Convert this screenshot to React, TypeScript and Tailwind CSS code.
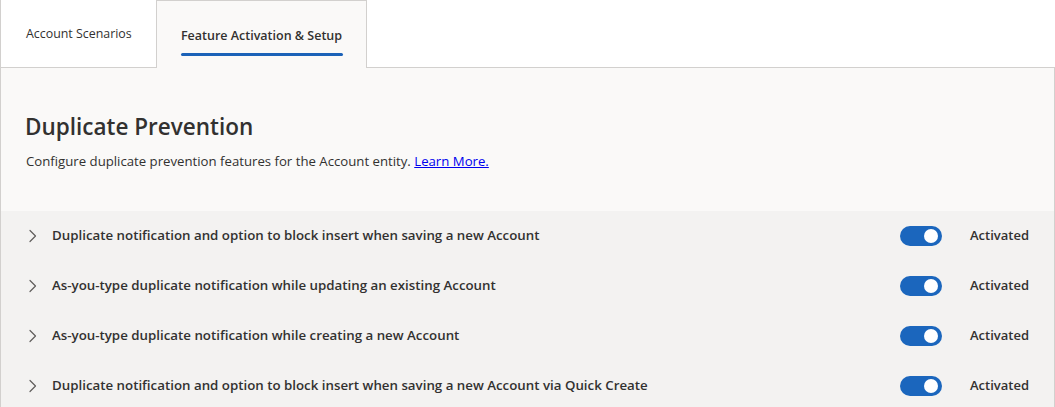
import React from "react";

const font = { fontFamily: '"Open Sans", "Noto Sans", sans-serif' };

const rules = [
  "Duplicate notification and option to block insert when saving a new Account",
  "As-you-type duplicate notification while updating an existing Account",
  "As-you-type duplicate notification while creating a new Account",
  "Duplicate notification and option to block insert when saving a new Account via Quick Create",
];

function Chevron() {
  return (
    <svg width="10" height="14" viewBox="0 0 10 14" fill="none" className="shrink-0">
      <path d="M3 1.5 L8.5 7 L3 12.5" stroke="#605e5c" strokeWidth="1.2" strokeLinecap="round" strokeLinejoin="round" />
    </svg>
  );
}

function Toggle() {
  return (
    <div className="flex h-[20px] w-[42px] items-center justify-end rounded-full bg-[#1b66bd] pr-[4px]">
      <div className="h-[14px] w-[14px] rounded-full bg-white" />
    </div>
  );
}

export default function App() {
  return (
    <div className="h-[407px] w-[1055px] overflow-hidden bg-white text-[#323130]" style={font}>
      {/* tab strip */}
      <div className="flex h-[68px]">
        <div className="flex w-[156px] items-center border-b border-l border-[#d2d0ce] pl-[25px] pt-[2px] text-[12.4px] text-[#323130]">
          Account Scenarios
        </div>
        <div className="relative flex w-[211px] flex-col items-center border-x border-t border-[#d2d0ce] bg-[#faf9f8] pt-[25px]">
          <span className="text-[12.5px] font-semibold leading-[20px] text-[#323130]">Feature Activation &amp; Setup</span>
          <span className="mt-[7px] h-[3px] w-[162px] rounded-full bg-[#1b62b8]" />
        </div>
        <div className="flex-1 border-b border-[#d2d0ce]" />
      </div>

      {/* content panel */}
      <div className="border-x border-[#d2d0ce] bg-[#faf9f8]">
        <div className="pb-[41px] pl-[24px] pr-[25px] pt-[44px]">
          <h1 className="text-[22.5px] font-semibold leading-[30px] text-[#323130]">Duplicate Prevention</h1>
          <p className="mt-[10px] pl-[1px] text-[13.2px] leading-[18px] text-[#323130]">
            Configure duplicate prevention features for the Account entity.{" "}
            <a className="text-[#0000ee] underline">Learn More.</a>
          </p>
        </div>
        <div className="bg-[#f3f2f1]">
          {rules.map((r) => (
            <div key={r} className="flex h-[50px] items-center pl-[26px] pr-[25px]">
              <Chevron />
              <span className="ml-[15px] flex-1 text-[13.3px] font-semibold text-[#323130]">{r}</span>
              <Toggle />
              <span className="ml-[28px] w-[59px] text-[13px] font-semibold text-[#323130]">Activated</span>
            </div>
          ))}
        </div>
      </div>
    </div>
  );
}
